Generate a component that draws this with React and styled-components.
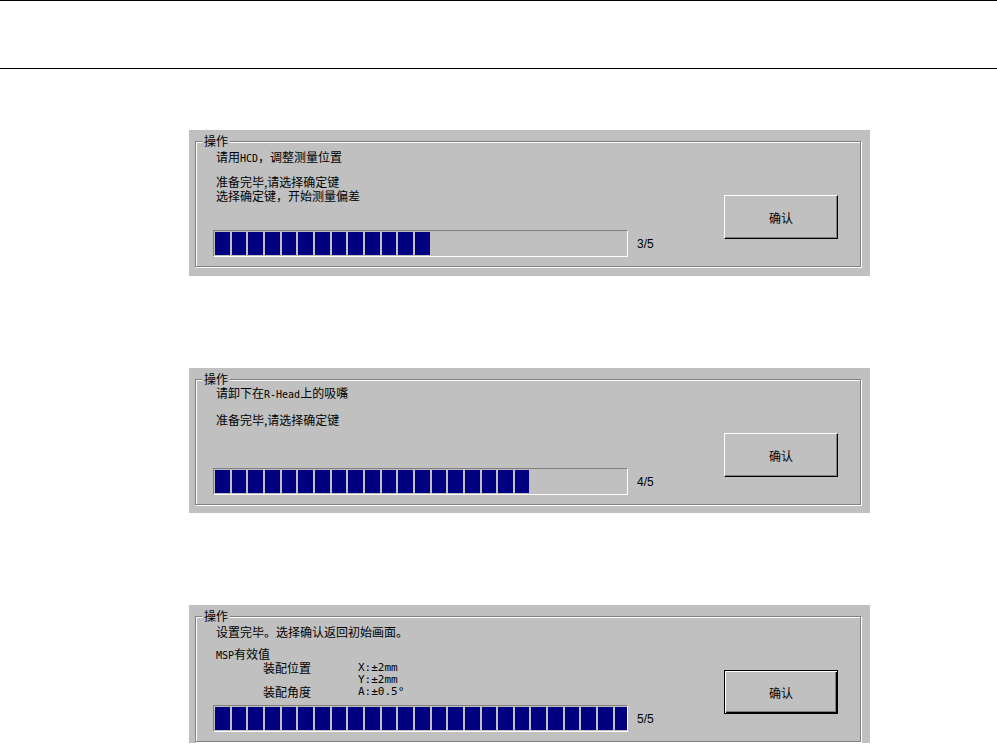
import styled, { createGlobalStyle } from 'styled-components'

const GlobalStyle = createGlobalStyle`
  html, body {
    margin: 0;
    background: #ffffff;
  }
  body {
    font-family: "Noto Sans CJK SC", "Liberation Sans", sans-serif;
    color: #000;
  }
`

const Page = styled.div`
  width: 997px;
  min-height: 749px;
  background: #ffffff;
`

const TopBar = styled.div`
  height: 67px;
  border-top: 1px solid #000;
  border-bottom: 1px solid #000;
`

const Steps = styled.div`
  display: flex;
  flex-direction: column;
  gap: 92px;
  padding: 61px 0 0 189px;
`

const Panel = styled.div`
  width: 681px;
  height: ${(p) => p.$height}px;
  box-sizing: border-box;
  padding: 11px 9px 0 6px;
  background: #c0c0c0;
`

const Group = styled.div`
  position: relative;
  height: 126px;
  box-sizing: border-box;
  border: 1px solid #808080;
  box-shadow: inset 1px 1px 0 #ffffff, 1px 1px 0 #ffffff;
  display: grid;
  grid-template-columns: 1fr 114px;
  padding: 0 22px 0 17px;
`

const Legend = styled.span`
  position: absolute;
  top: -8px;
  left: 6px;
  padding: 0 2px;
  background: #c0c0c0;
  font-size: 12px;
  line-height: 13px;
`

const Body = styled.div`
  display: flex;
  flex-direction: column;
  padding-top: ${(p) => p.$top ?? 8}px;
  padding-bottom: 9px;
`

const Message = styled.div`
  flex: 1;
  padding-left: 3px;
  font-size: 12px;
  line-height: 13px;
`

const Line = styled.div`
  margin-top: ${(p) => p.$gap || 0}px;
  white-space: nowrap;
`

// half-width latin in the messages is a narrow fixed-pitch face
const Latin = styled.span`
  font-family: "DejaVu Sans Mono", "Liberation Mono", monospace;
  font-size: 10px;
`

const SpecTable = styled.div`
  display: grid;
  grid-template-columns: 95px auto;
  padding-left: 47px;
  line-height: 12px;
  white-space: nowrap;
`

const SpecValue = styled.span`
  font-family: "DejaVu Sans Mono", "Liberation Mono", monospace;
  font-size: 11px;
`

const ProgressRow = styled.div`
  display: flex;
  align-items: center;
  gap: 9px;
`

const Track = styled.div`
  width: 415px;
  height: 27px;
  box-sizing: border-box;
  border: 1px solid;
  border-color: #808080 #ffffff #ffffff #808080;
  padding: 1px;
  display: flex;
  gap: 2px;
  overflow: hidden;
`

const Chunk = styled.div`
  flex: 0 0 14.67px;
  height: 100%;
  background: #000080;
`

const Count = styled.span`
  font-family: "Liberation Sans", Arial, sans-serif;
  font-size: 12px;
`

const Actions = styled.div`
  padding-top: 53px;
`

const Button = styled.button`
  width: 114px;
  height: 44px;
  box-sizing: border-box;
  padding: 0;
  background: #c0c0c0;
  color: #000;
  font-family: "Noto Sans CJK SC", sans-serif;
  font-size: 12px;
  border: 1px solid;
  border-color: ${(p) => (p.$default ? '#000' : '#ffffff #000 #000 #ffffff')};
  box-shadow: ${(p) =>
    p.$default
      ? 'inset 1px 1px 0 #ffffff, inset -1px -1px 0 #000, inset -2px -2px 0 #808080'
      : 'inset -1px -1px 0 #808080'};
`

function Progress({ blocks, label }) {
  return (
    <ProgressRow>
      <Track>
        {Array.from({ length: blocks }, (_, i) => (
          <Chunk key={i} />
        ))}
      </Track>
      <Count>{label}</Count>
    </ProgressRow>
  )
}

function StepPanel({ height, top, blocks, label, isDefault, children }) {
  return (
    <Panel $height={height}>
      <Group>
        <Legend>操作</Legend>
        <Body $top={top}>
          <Message>{children}</Message>
          <Progress blocks={blocks} label={label} />
        </Body>
        <Actions>
          <Button $default={isDefault}>确认</Button>
        </Actions>
      </Group>
    </Panel>
  )
}

export default function App() {
  return (
    <Page>
      <GlobalStyle />
      <TopBar />
      <Steps>
        <StepPanel height={146} blocks={13} label="3/5">
          <Line>请用<Latin>HCD</Latin>，调整测量位置</Line>
          <Line $gap={10}>准备完毕,请选择确定键</Line>
          <Line $gap={1}>选择确定键，开始测量偏差</Line>
        </StepPanel>

        <StepPanel height={145} top={6} blocks={19} label="4/5">
          <Line>请卸下在<Latin>R-Head</Latin>上的吸嘴</Line>
          <Line $gap={12}>准备完毕,请选择确定键</Line>
        </StepPanel>

        <StepPanel height={138} blocks={25} label="5/5" isDefault>
          <Line>设置完毕。选择确认返回初始画面。</Line>
          <Line $gap={9}><Latin>MSP</Latin>有效值</Line>
          <SpecTable>
            <span>装配位置</span>
            <SpecValue>X:±2mm</SpecValue>
            <span />
            <SpecValue>Y:±2mm</SpecValue>
            <span>装配角度</span>
            <SpecValue>A:±0.5°</SpecValue>
          </SpecTable>
        </StepPanel>
      </Steps>
    </Page>
  )
}
